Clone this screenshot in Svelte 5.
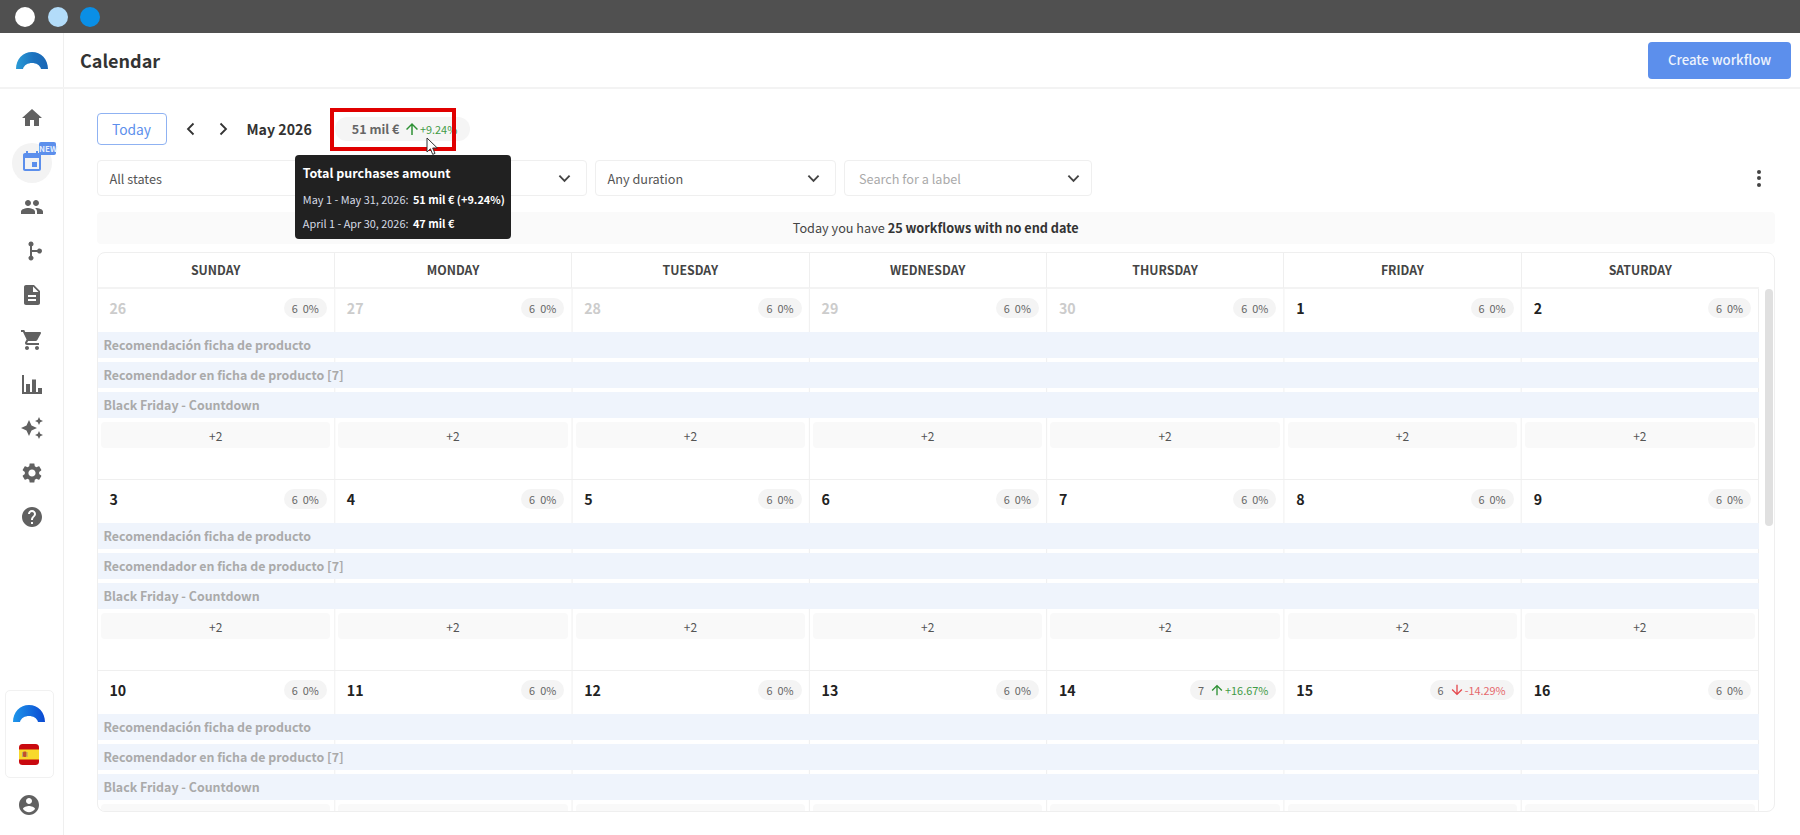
<script>
  const icons = {
    home: "M10 20v-6h4v6h5v-8h3L12 3 2 12h3v8z",
    event: "M17 12h-5v5h5v-5zM16 1v2H8V1H6v2H5c-1.11 0-1.99.9-1.99 2L3 19c0 1.1.89 2 2 2h14c1.1 0 2-.9 2-2V5c0-1.1-.9-2-2-2h-1V1h-2zm3 18H5V8h14v11z",
    people: "M16 11c1.66 0 2.99-1.34 2.99-3S17.66 5 16 5c-1.66 0-3 1.34-3 3s1.34 3 3 3zm-8 0c1.66 0 2.99-1.34 2.99-3S9.66 5 8 5C6.34 5 5 6.34 5 8s1.34 3 3 3zm0 2c-2.33 0-7 1.17-7 3.5V19h14v-2.5c0-2.33-4.67-3.5-7-3.5zm8 0c-.29 0-.62.02-.97.05 1.16.84 1.97 1.97 1.97 3.45V19h6v-2.5c0-2.33-4.67-3.5-7-3.5z",
    flow: "M11 2.5a2.5 2.5 0 0 1 1 4.8V11h5.2a2.5 2.5 0 1 1 0 2H12v3.7a2.5 2.5 0 1 1-2 0V7.300a2.500 2.500 0 0 1 1-4.800z",
    doc: "M14 2H6c-1.1 0-1.99.9-1.99 2L4 20c0 1.1.89 2 1.99 2H18c1.1 0 2-.9 2-2V8l-6-6zm2 16H8v-2h8v2zm0-4H8v-2h8v2zm-3-5V3.500L18.500 9H13z",
    cart: "M7 18c-1.1 0-1.99.9-1.99 2S5.900 22 7 22s2-.9 2-2-.9-2-2-2zM1 2v2h2l3.600 7.590-1.350 2.450c-.16.280-.25.610-.25.960 0 1.100.900 2 2 2h12v-2H7.420c-.14 0-.25-.110-.25-.250l.03-.120.900-1.630h7.450c.750 0 1.410-.410 1.750-1.030l3.580-6.490c.080-.140.120-.310.120-.480 0-.550-.450-1-1-1H5.210l-.940-2H1zm16 16c-1.100 0-1.990.900-1.990 2s.890 2 1.990 2 2-.900 2-2-.900-2-2-2z",
    chart: "M2 3h2v17h2v-8h4v8h2V7.500h4V20h2v-4h4v6H2z",
    spark: "M19 9l1.250-2.750L23 5l-2.750-1.250L19 1l-1.250 2.750L15 5l2.750 1.250L19 9zm-7.500.5L9 4 6.500 9.500 1 12l5.500 2.500L9 20l2.500-5.500L17 12l-5.500-2.500zM19 15l-1.250 2.750L15 19l2.750 1.250L19 23l1.250-2.750L23 19l-2.750-1.250L19 15z",
    gear: "M19.140 12.940c.04-.3.060-.610.060-.940 0-.320-.020-.640-.070-.940l2.030-1.580c.180-.140.230-.410.120-.610l-1.920-3.320c-.120-.220-.370-.290-.590-.220l-2.390.960c-.5-.380-1.030-.7-1.620-.940l-.360-2.540c-.040-.240-.240-.410-.480-.410h-3.840c-.240 0-.430.170-.470.410l-.360 2.540c-.590.240-1.130.570-1.620.940l-2.390-.960c-.220-.080-.470 0-.590.220L2.740 8.870c-.120.210-.080.470.120.610l2.030 1.580c-.050.3-.090.630-.090.940s.020.640.070.940l-2.030 1.580c-.180.140-.230.410-.120.610l1.920 3.320c.120.220.370.290.590.220l2.390-.960c.5.380 1.030.7 1.620.94l.360 2.540c.050.240.240.410.480.410h3.840c.240 0 .440-.170.470-.410l.360-2.540c.590-.240 1.130-.56 1.620-.94l2.390.96c.22.08.47 0 .59-.22l1.920-3.320c.12-.22.07-.47-.12-.61l-2.010-1.58zM12 15.600c-1.980 0-3.600-1.620-3.600-3.600s1.620-3.600 3.600-3.600 3.600 1.620 3.600 3.600-1.620 3.600-3.600 3.600z",
    help: "M12 2C6.480 2 2 6.480 2 12s4.480 10 10 10 10-4.480 10-10S17.520 2 12 2zm1 17h-2v-2h2v2zm2.070-7.750l-.9.920C13.450 12.900 13 13.500 13 15h-2v-.5c0-1.100.450-2.100 1.170-2.830l1.240-1.260c.370-.360.590-.860.590-1.410 0-1.100-.9-2-2-2s-2 .9-2 2H8c0-2.210 1.790-4 4-4s4 1.790 4 4c0 .880-.360 1.680-.930 2.250z"
  };
  const user = "M12 2C6.480 2 2 6.480 2 12s4.480 10 10 10 10-4.480 10-10S17.520 2 12 2zm0 3c1.660 0 3 1.340 3 3s-1.340 3-3 3-3-1.340-3-3 1.340-3 3-3zm0 14.200c-2.500 0-4.710-1.280-6-3.220.030-1.990 4-3.080 6-3.080 1.990 0 5.970 1.090 6 3.080-1.290 1.940-3.500 3.220-6 3.220z";
  const up = "M4 12l1.410 1.410L11 7.830V20h2V7.830l5.580 5.590L20 12l-8-8-8 8z";
  const down = "M20 12l-1.410-1.410L13 16.170V4h-2v12.170l-5.580-5.590L4 12l8 8 8-8z";

  const nav = ["home", "event", "people", "flow", "doc", "cart", "chart", "spark", "gear", "help"];
  const weekdays = ["SUNDAY", "MONDAY", "TUESDAY", "WEDNESDAY", "THURSDAY", "FRIDAY", "SATURDAY"];
  const bars = ["Recomendación ficha de producto", "Recomendador en ficha de producto [7]", "Black Friday - Countdown"];

  const weeks = [
    [26, 27, 28, 29, 30, 1, 2],
    [3, 4, 5, 6, 7, 8, 9],
    [10, 11, 12, 13, 14, 15, 16]
  ];
  const deltas = {
    14: { count: 7, dir: "up", pct: "+16.67%" },
    15: { count: 6, dir: "down", pct: "-14.29%" }
  };
  const muted = (w, d) => w === 0 && d > 20;
</script>

<div class="window">
  <div class="chrome">
    <span class="dot white"></span>
    <span class="dot pale"></span>
    <span class="dot blue"></span>
  </div>

  <header class="topbar">
    <div class="brand">
      <svg class="arch" viewBox="0 0 32 17">
        <defs>
          <linearGradient id="arch1" x1="0" x2="1" y1="0" y2="0">
            <stop offset="0" stop-color="#2a9bd6" />
            <stop offset="0.55" stop-color="#1c72bf" />
            <stop offset="1" stop-color="#1a66b4" />
          </linearGradient>
        </defs>
        <path fill="url(#arch1)" d="M0 17C0 7 7 0 16 0s16 7 16 17h-7c-1-4-5-6-9-6s-8 2-9 6z" />
      </svg>
    </div>
    <h1>Calendar</h1>
    <button class="create">Create workflow</button>
  </header>

  <div class="body">
    <aside class="sidebar">
      <nav>
        {#each nav as name}
          <div class="nav-item" class:active={name === "event"}>
            <svg viewBox="0 0 24 24"><path d={icons[name]} /></svg>
            {#if name === "event"}<span class="new">NEW</span>{/if}
          </div>
        {/each}
      </nav>
      <div class="account">
        <div class="account-card">
          <svg class="arch2" viewBox="0 0 32 17">
            <defs>
              <linearGradient id="arch2" x1="0" x2="1" y1="0" y2="0">
                <stop offset="0" stop-color="#1e96ea" />
                <stop offset="1" stop-color="#0b49d2" />
              </linearGradient>
            </defs>
            <path fill="url(#arch2)" d="M0 17C0 7 7 0 16 0s16 7 16 17h-7c-1-4-5-6-9-6s-8 2-9 6z" />
          </svg>
          <svg class="flag" viewBox="0 0 20 21">
            <rect width="20" height="21" rx="3.500" fill="#c9090f" />
            <rect y="5.500" width="20" height="10" fill="#f8d92c" />
            <rect x="4" y="7.500" width="3.500" height="5.500" rx="1" fill="#c0502c" />
            <rect x="3" y="8" width="0.800" height="5" fill="#a89a7c" />
            <rect x="7.700" y="8" width="0.800" height="5" fill="#a89a7c" />
          </svg>
        </div>
        <svg class="user" viewBox="2 2 20 20"><path d={user} /></svg>
      </div>
    </aside>

    <main>
      <div class="toolbar">
        <button class="today">Today</button>
        <div class="arrows">
          <svg viewBox="0 0 12 14"><polyline points="8.500,1.500 3,7 8.500,12.500" /></svg>
          <svg viewBox="0 0 12 14"><polyline points="3.500,1.500 9,7 3.500,12.500" /></svg>
        </div>
        <span class="month">May 2026</span>
        <div class="amount">
          <span class="amount-value">51 mil €</span>
          <svg class="trend-up" viewBox="0 0 24 24"><path d={up} /></svg>
          <span class="amount-pct">+9.24%</span>

          <div class="highlight"></div>
          <svg class="cursor" viewBox="0 0 12 20">
            <path d="M1 1v14l3.400-3.200 2.300 5.600 2.300-1-2.300-5.400h4.600z" />
          </svg>
          <div class="tooltip">
            <div class="tip-title">Total purchases amount</div>
            <div class="tip-line">May 1 - May 31, 2026: <b>51 mil € (+9.24%)</b></div>
            <div class="tip-line">April 1 - Apr 30, 2026: <b>47 mil €</b></div>
          </div>
        </div>
      </div>

      <div class="filters-row">
        <div class="filters">
          <div class="select"><span>All states</span><svg viewBox="0 0 14 9"><polyline points="1.500,1.500 7,7 12.500,1.500" /></svg></div>
          <div class="select"><svg viewBox="0 0 14 9"><polyline points="1.500,1.500 7,7 12.500,1.500" /></svg></div>
          <div class="select"><span>Any duration</span><svg viewBox="0 0 14 9"><polyline points="1.500,1.500 7,7 12.500,1.500" /></svg></div>
          <div class="select search"><span>Search for a label</span><svg viewBox="0 0 14 9"><polyline points="1.500,1.500 7,7 12.500,1.500" /></svg></div>
        </div>
        <div class="kebab"><i></i><i></i><i></i></div>
      </div>

      <div class="notice">Today you have <b>25 workflows with no end date</b></div>

      <section class="calendar">
        <div class="weekdays">
          {#each weekdays as day}
            <div>{day}</div>
          {/each}
        </div>
        <div class="weeks">
          {#each weeks as week, w}
            <div class="week">
              {#each week as d}
                <div class="day">
                  <span class="num" class:muted={muted(w, d)}>{d}</span>
                  <span class="stat">
                    {#if deltas[d]}
                      <span>{deltas[d].count}</span>
                      <svg class={deltas[d].dir} viewBox="0 0 24 24"><path d={deltas[d].dir === "up" ? up : down} /></svg>
                      <span class={deltas[d].dir}>{deltas[d].pct}</span>
                    {:else}
                      <span>6</span><span>0%</span>
                    {/if}
                  </span>
                </div>
              {/each}
              {#each bars as bar}
                <div class="bar">{bar}</div>
              {/each}
              {#each week as d}
                <div class="more-cell"><div class="more">+2</div></div>
              {/each}
            </div>
          {/each}
        </div>
        <div class="thumb"></div>
      </section>
    </main>
  </div>
</div>

<style>
  :global(body) {
    margin: 0;
    background: #fff;
    font-family: "Noto Sans CJK SC", "Noto Sans", sans-serif;
    color: #333;
  }
  .window {
    height: 835px;
    display: flex;
    flex-direction: column;
    overflow: hidden;
  }
  .chrome {
    height: 33px;
    background: #505050;
    display: flex;
    align-items: center;
    gap: 12.500px;
    padding-left: 15px;
    flex: none;
  }
  .dot {
    width: 20px;
    height: 20px;
    border-radius: 50%;
  }
  .white { background: #fff; }
  .pale { background: #b3dcf9; }
  .blue { background: #0a8fe6; }

  .topbar {
    height: 56px;
    flex: none;
    box-sizing: border-box;
    border-bottom: 2px solid #f3f3f3;
    display: flex;
    align-items: center;
    padding-right: 9px;
  }
  .brand {
    width: 64px;
    height: 54px;
    box-sizing: border-box;
    border-right: 1px solid #efefef;
    display: flex;
    align-items: center;
    justify-content: center;
    flex: none;
  }
  .arch {
    width: 32px;
    height: 17px;
  }
  h1 {
    margin: 0 0 0 16px;
    font-size: 18px;
    line-height: 28px;
    font-weight: 700;
    color: #333;
    flex: 1;
  }
  .create {
    width: 143px;
    height: 37px;
    border: 0;
    border-radius: 4px;
    background: #5c8fec;
    color: #edf3fd;
    font: 500 13.200px/22px "Noto Sans CJK SC", sans-serif;
  }

  .body {
    flex: 1;
    display: flex;
    min-height: 0;
  }
  .sidebar {
    width: 64px;
    flex: none;
    box-sizing: border-box;
    border-right: 1px solid #efefef;
    display: flex;
    flex-direction: column;
    justify-content: space-between;
    padding: 7px 0 20px;
  }
  nav {
    display: flex;
    flex-direction: column;
  }
  .nav-item {
    height: 44.330px;
    display: flex;
    align-items: center;
    justify-content: center;
    position: relative;
  }
  .nav-item svg {
    width: 24px;
    height: 24px;
    fill: #616161;
    position: relative;
  }
  .nav-item.active::before {
    content: "";
    position: absolute;
    left: 12px;
    top: 2.200px;
    width: 40px;
    height: 40px;
    border-radius: 50%;
    background: #f3f3f3;
  }
  .nav-item.active svg {
    fill: #5c8fec;
  }
  .new {
    position: absolute;
    left: 39px;
    top: 2px;
    width: 17px;
    height: 13px;
    border-radius: 2px;
    background: #5c8fec;
    color: #e6eefc;
    font-size: 8px;
    line-height: 13px;
    font-weight: 700;
    text-align: center;
  }
  .account {
    width: 58px;
    display: flex;
    flex-direction: column;
    align-items: center;
  }
  .account-card {
    width: 49px;
    height: 88px;
    box-sizing: border-box;
    border: 1px solid #f1f1f1;
    border-radius: 5px;
    display: flex;
    flex-direction: column;
    align-items: center;
    padding-top: 14px;
    gap: 22px;
  }
  .arch2 {
    width: 32px;
    height: 17px;
  }
  .flag {
    width: 20px;
    height: 21px;
  }
  .user {
    width: 20px;
    height: 20px;
    margin-top: 17px;
    fill: #616161;
  }

  main {
    flex: 1;
    min-width: 0;
    padding: 24px 25px 0 32.500px;
  }
  .toolbar {
    height: 32px;
    display: flex;
    align-items: center;
  }
  .today {
    width: 70px;
    height: 32px;
    box-sizing: border-box;
    border: 1px solid #8fb2f2;
    border-radius: 4px;
    background: #fff;
    color: #5c8fec;
    font: 400 13.800px/20px "Noto Sans CJK SC", sans-serif;
  }
  .arrows {
    display: flex;
    gap: 20px;
    margin-left: 18px;
  }
  .arrows svg {
    width: 12px;
    height: 14px;
    fill: none;
    stroke: #333;
    stroke-width: 1.800;
  }
  .month {
    margin-left: 18px;
    font-size: 14.200px;
    line-height: 22px;
    font-weight: 700;
    color: #333;
  }
  .amount {
    position: relative;
    margin-left: 23px;
    width: 135px;
    height: 24px;
    box-sizing: border-box;
    border-radius: 12px;
    background: #f5f5f5;
    display: flex;
    align-items: center;
    padding-left: 17px;
  }
  .amount-value {
    font-size: 12.500px;
    font-weight: 700;
    color: #666;
    line-height: 20px;
  }
  .trend-up {
    width: 18px;
    height: 18px;
    fill: #2e9135;
    margin-left: 3.500px;
    flex: none;
  }
  .amount-pct {
    font-size: 10.900px;
    color: #3f9a46;
    margin-left: -1px;
    line-height: 18px;
  }
  .highlight {
    position: absolute;
    left: -5px;
    top: -9px;
    width: 126px;
    height: 43px;
    box-sizing: border-box;
    border: 4px solid #e00000;
  }
  .cursor {
    position: absolute;
    left: 91px;
    top: 20px;
    width: 12px;
    height: 20px;
    fill: #fff;
    stroke: #333;
    stroke-width: 1;
  }
  .tooltip {
    position: absolute;
    left: -40px;
    top: 38px;
    width: 216px;
    height: 84px;
    box-sizing: border-box;
    background: #212121;
    border-radius: 4px;
    padding: 7px 8px;
    color: #d6dbe6;
    white-space: nowrap;
    z-index: 2;
  }
  .tip-title {
    font-size: 12.500px;
    font-weight: 700;
    line-height: 22px;
    color: #fff;
    margin-bottom: 3px;
  }
  .tip-line {
    font-size: 10.900px;
    line-height: 24px;
  }
  .tip-line b {
    color: #fff;
    font-weight: 700;
    margin-left: 2px;
  }

  .filters-row {
    display: flex;
    align-items: center;
    justify-content: space-between;
    margin-top: 15px;
    height: 36px;
    padding-right: 14px;
  }
  .filters {
    display: grid;
    grid-template-columns: 241px 241px 241px 248px;
    gap: 8px;
  }
  .select {
    height: 36px;
    box-sizing: border-box;
    border: 1px solid #efefef;
    border-radius: 4px;
    display: flex;
    align-items: center;
    justify-content: space-between;
    padding: 0 15px 0 12px;
    font-size: 12.700px;
    color: #555;
  }
  .select.search {
    color: #aaa;
    padding: 0 11px 0 14.500px;
  }
  .select svg {
    width: 13px;
    height: 9px;
    margin-left: auto;
    fill: none;
    stroke: #444;
    stroke-width: 2;
  }
  .kebab {
    display: flex;
    flex-direction: column;
    gap: 2.500px;
  }
  .kebab i {
    width: 4px;
    height: 4px;
    border-radius: 50%;
    background: #444;
  }

  .notice {
    margin-top: 16px;
    height: 32px;
    background: #fafafa;
    border-radius: 4px;
    text-align: center;
    font-size: 12.700px;
    line-height: 32px;
    color: #444;
  }
  .notice b {
    font-weight: 700;
    color: #333;
  }

  .calendar {
    position: relative;
    margin-top: 8px;
    height: 560px;
    box-sizing: border-box;
    border: 1px solid #efefef;
    border-radius: 8px;
    overflow: hidden;
  }
  .weekdays {
    display: grid;
    grid-template-columns: repeat(7, 1fr);
    margin-right: 15px;
    height: 36px;
    box-sizing: border-box;
    border-bottom: 2px solid #f3f3f3;
  }
  .weekdays div {
    border-right: 1px solid #efefef;
    text-align: center;
    font-size: 12.300px;
    font-weight: 700;
    line-height: 35px;
    color: #444;
  }
  .weekdays div:last-child {
    border-right: 0;
  }
  .weeks {
    margin-right: 15px;
  }
  .week {
    height: 191px;
    box-sizing: border-box;
    border-bottom: 1px solid #efefef;
    display: grid;
    grid-template-columns: repeat(7, 1fr);
    grid-template-rows: 39px 26px 26px 26px 26px;
    row-gap: 4px;
    align-content: start;
    background-image: linear-gradient(90deg, transparent calc(100% - 1px), #efefef calc(100% - 1px));
    background-size: calc(100% / 7) 100%;
  }
  .day {
    display: flex;
    align-items: center;
    justify-content: space-between;
    padding: 0 8px 2px 12px;
    min-width: 0;
  }
  .num {
    font-size: 14.200px;
    line-height: 20px;
    font-weight: 700;
    color: #222;
  }
  .num.muted {
    color: #ccc;
  }
  .stat {
    height: 20px;
    box-sizing: border-box;
    padding: 0 8px;
    border-radius: 10px;
    background: #f4f4f4;
    display: flex;
    align-items: center;
    gap: 5px;
    font-size: 10.900px;
    line-height: 20px;
    color: #666;
    white-space: nowrap;
  }
  .stat svg {
    width: 16px;
    height: 16px;
    margin: 0 -5px 0 0;
    flex: none;
  }
  svg.up { fill: #2e9135; }
  svg.down { fill: #e5484d; }
  span.up { color: #3f9a46; }
  span.down { color: #e5686c; }
  .bar {
    grid-column: 1 / -1;
    background: #eff4fc;
    padding-left: 6px;
    font-size: 12.400px;
    font-weight: 700;
    line-height: 27px;
    height: 26px;
    color: #aaa;
  }
  .more-cell {
    padding: 0 4.500px 0 3.500px;
    min-width: 0;
  }
  .more {
    height: 26px;
    border-radius: 4px;
    background: #f9f9f9;
    text-align: center;
    font-size: 12px;
    line-height: 27px;
    color: #555;
  }
  .thumb {
    position: absolute;
    right: 1px;
    top: 36px;
    width: 8px;
    height: 237px;
    border-radius: 4px;
    background: #e0e0e0;
  }
</style>
